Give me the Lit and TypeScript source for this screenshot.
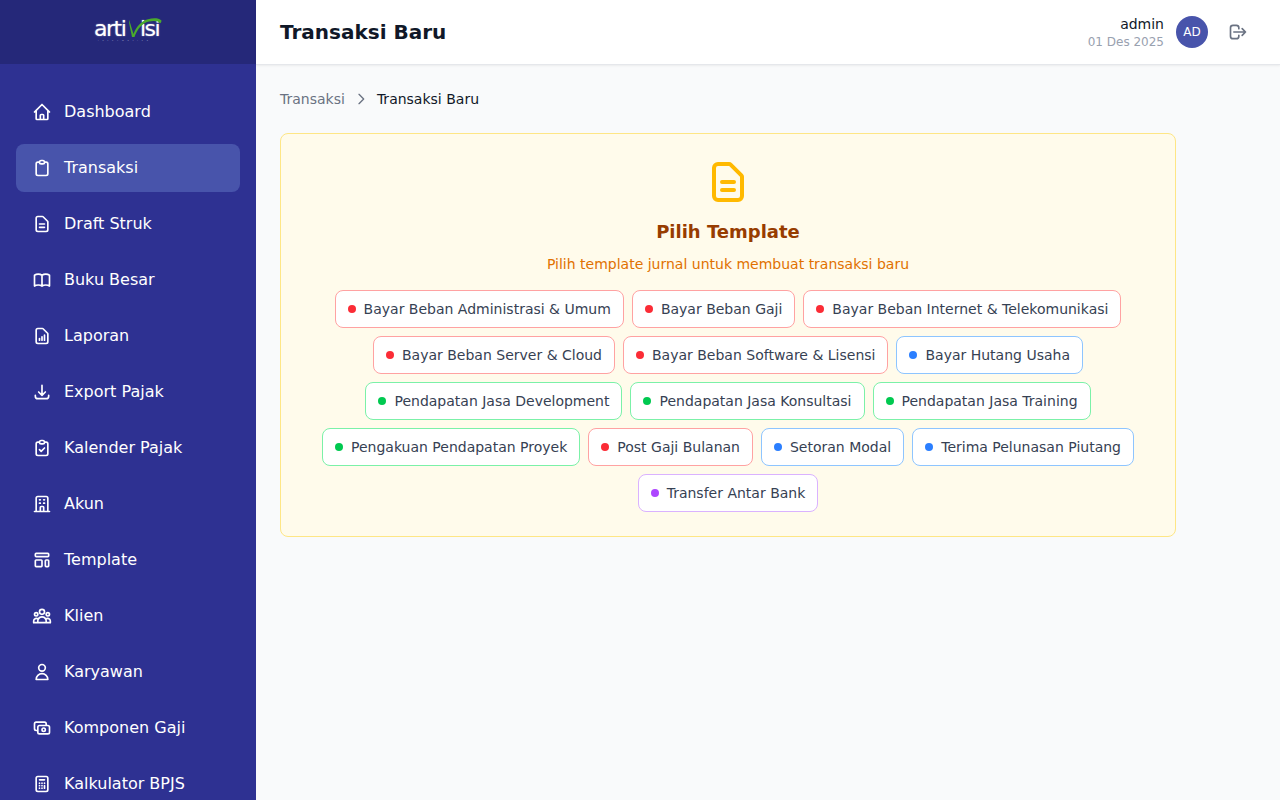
import { LitElement, html, css, svg } from "lit";
import { customElement } from "lit/decorators.js";

const ic: Record<string, string> = {
  home: "M3 12l2-2m0 0l7-7 7 7M5 10v10a1 1 0 001 1h3m10-11l2 2m-2-2v10a1 1 0 01-1 1h-3m-6 0a1 1 0 001-1v-4a1 1 0 011-1h2a1 1 0 011 1v4a1 1 0 001 1m-6 0h6",
  clip: "M9 5H7a2 2 0 00-2 2v12a2 2 0 002 2h10a2 2 0 002-2V7a2 2 0 00-2-2h-2M9 5a2 2 0 002 2h2a2 2 0 002-2M9 5a2 2 0 012-2h2a2 2 0 012 2",
  doc: "M9 12h6m-6 4h6m2 5H7a2 2 0 01-2-2V5a2 2 0 012-2h5.586a1 1 0 01.707.293l5.414 5.414a1 1 0 01.293.707V19a2 2 0 01-2 2z",
  book: "M12 6.253v13m0-13C10.832 5.477 9.246 5 7.5 5S4.168 5.477 3 6.253v13C4.168 18.477 5.754 18 7.5 18s3.332.477 4.5 1.253m0-13C13.168 5.477 14.754 5 16.5 5c1.747 0 3.332.477 4.5 1.253v13C19.832 18.477 18.247 18 16.5 18c-1.746 0-3.332.477-4.5 1.253",
  report: "M9 17v-2m3 2v-4m3 4v-6m2 10H7a2 2 0 01-2-2V5a2 2 0 012-2h5.586a1 1 0 01.707.293l5.414 5.414a1 1 0 01.293.707V19a2 2 0 01-2 2z",
  down: "M4 16v1a3 3 0 003 3h10a3 3 0 003-3v-1m-4-4l-4 4m0 0l-4-4m4 4V4",
  check: "M9 5H7a2 2 0 00-2 2v12a2 2 0 002 2h10a2 2 0 002-2V7a2 2 0 00-2-2h-2M9 5a2 2 0 002 2h2a2 2 0 002-2M9 5a2 2 0 012-2h2a2 2 0 012 2m-6 9l2 2 4-4",
  office: "M19 21V5a2 2 0 00-2-2H7a2 2 0 00-2 2v16m14 0h2m-2 0h-5m-9 0H3m2 0h5M9 7h1m-1 4h1m4-4h1m-1 4h1m-5 10v-5a1 1 0 011-1h2a1 1 0 011 1v5m-4 0h4",
  tpl: "M4 5a1 1 0 011-1h14a1 1 0 011 1v2a1 1 0 01-1 1H5a1 1 0 01-1-1V5zM4 13a1 1 0 011-1h6a1 1 0 011 1v6a1 1 0 01-1 1H5a1 1 0 01-1-1v-6zM16 13a1 1 0 011-1h2a1 1 0 011 1v6a1 1 0 01-1 1h-2a1 1 0 01-1-1v-6z",
  group: "M17 20h5v-2a3 3 0 00-5.356-1.857M17 20H7m10 0v-2c0-.656-.126-1.283-.356-1.857M7 20H2v-2a3 3 0 015.356-1.857M7 20v-2c0-.656.126-1.283.356-1.857m0 0a5.002 5.002 0 019.288 0M15 7a3 3 0 11-6 0 3 3 0 016 0zm6 3a2 2 0 11-4 0 2 2 0 014 0zM7 10a2 2 0 11-4 0 2 2 0 014 0z",
  user: "M16 7a4 4 0 11-8 0 4 4 0 018 0zM12 14a7 7 0 00-7 7h14a7 7 0 00-7-7z",
  cash: "M17 9V7a2 2 0 00-2-2H5a2 2 0 00-2 2v6a2 2 0 002 2h2m2 4h10a2 2 0 002-2v-6a2 2 0 00-2-2H9a2 2 0 00-2 2v6a2 2 0 002 2zm7-5a2 2 0 11-4 0 2 2 0 014 0z",
  calc: "M9 7h6m0 10v-3m-3 3h.01M9 17h.01M9 14h.01M12 14h.01M15 11h.01M12 11h.01M9 11h.01M7 21h10a2 2 0 002-2V5a2 2 0 00-2-2H7a2 2 0 00-2 2v14a2 2 0 002 2z",
  logout: "M17 16l4-4m0 0l-4-4m4 4H7m6 4v1a3 3 0 01-3 3H6a3 3 0 01-3-3V7a3 3 0 013-3h4a3 3 0 013 3v1",
  chev: "M9 5l7 7-7 7",
};

const icon = (n: string, cls: string) => html`<svg class=${cls} viewBox="0 0 24 24" fill="none" stroke="currentColor" stroke-width="2" stroke-linecap="round" stroke-linejoin="round">${svg`<path d=${ic[n]}></path>`}</svg>`;

const nav: [string, string, boolean?][] = [
  ["home", "Dashboard"],
  ["clip", "Transaksi", true],
  ["doc", "Draft Struk"],
  ["book", "Buku Besar"],
  ["report", "Laporan"],
  ["down", "Export Pajak"],
  ["check", "Kalender Pajak"],
  ["office", "Akun"],
  ["tpl", "Template"],
  ["group", "Klien"],
  ["user", "Karyawan"],
  ["cash", "Komponen Gaji"],
  ["calc", "Kalkulator BPJS"],
];

const rows: [string, string][] = [
  ["red", "Bayar Beban Administrasi & Umum"],
  ["red", "Bayar Beban Gaji"],
  ["red", "Bayar Beban Internet & Telekomunikasi"],
  ["red", "Bayar Beban Server & Cloud"],
  ["red", "Bayar Beban Software & Lisensi"],
  ["blue", "Bayar Hutang Usaha"],
  ["green", "Pendapatan Jasa Development"],
  ["green", "Pendapatan Jasa Konsultasi"],
  ["green", "Pendapatan Jasa Training"],
  ["green", "Pengakuan Pendapatan Proyek"],
  ["red", "Post Gaji Bulanan"],
  ["blue", "Setoran Modal"],
  ["blue", "Terima Pelunasan Piutang"],
  ["purple", "Transfer Antar Bank"],
];

@customElement("app-root")
export class AppRoot extends LitElement {
  static styles = css`
    :host { display: block; font-family: "DejaVu Sans", sans-serif; }
    * { box-sizing: border-box; }
    .app { display: flex; height: 100vh; overflow: hidden; background: #f9fafb; }
    .side { width: 256px; flex: none; background: #2e3192; color: #fff; display: flex; flex-direction: column; overflow: hidden; }
    .brand { height: 64px; flex: none; background: #252879; display: flex; justify-content: center; padding-top: 16px; }
    .logo { position: relative; width: 68px; height: 26px; display: flex; font-family: "DejaVu Sans", sans-serif; font-weight: 400; font-size: 22px; line-height: 26px; letter-spacing: -1.5px; color: #fff; text-shadow: 0 0 1.5px rgba(255,255,255,.6); }
    .logo .sw { position: absolute; left: 0; top: 0; width: 68px; height: 26px; overflow: visible; }
    .logo .a { width: 46px; flex: none; }
    .tiny { position: absolute; left: 4px; top: 22px; width: 60px; font-size: 2px; line-height: 4px; letter-spacing: 4px; color: #b9bbdc; white-space: nowrap; text-shadow: none; font-family: "Liberation Sans", sans-serif; }
    nav { padding: 24px 16px 0; display: flex; flex-direction: column; gap: 8px; }
    .item { height: 48px; flex: none; display: flex; align-items: center; gap: 12px; padding: 0 16px; border-radius: 8px; font-size: 16px; line-height: 24px; color: #fff; }
    .item span { display: block; height: 24px; margin-top: -1px; }
    .item.on { background: #4854ab; }
    .ni { width: 20px; height: 20px; flex: none; }
    .main { flex: 1; min-width: 0; display: flex; flex-direction: column; }
    header { height: 65px; flex: none; background: #fff; display: flex; align-items: center; justify-content: space-between; padding: 0 24px; border-bottom: 1px solid #e5e7eb; box-shadow: 0 1px 2px rgba(0,0,0,.06); position: relative; }
    h1 { margin: 0; font-size: 20px; line-height: 28px; font-weight: 700; color: #101828; }
    .right { display: flex; align-items: center; gap: 12px; }
    .who { text-align: right; }
    .name { font-size: 14px; line-height: 20px; color: #101828; }
    .date { font-size: 12px; line-height: 16px; color: #99a1af; }
    .av { width: 32px; height: 32px; border-radius: 50%; background: #4854ab; color: #fff; font-size: 12px; display: flex; align-items: center; justify-content: center; }
    .out { width: 36px; height: 36px; display: flex; align-items: center; justify-content: center; color: #6a7282; }
    .out svg { width: 20px; height: 20px; }
    .content { padding: 24px; }
    .crumb { display: flex; align-items: center; gap: 8px; font-size: 14px; line-height: 20px; height: 20px; color: #6a7282; margin-bottom: 24px; }
    .crumb svg { width: 16px; height: 16px; color: #6a7282; }
    .crumb b { font-weight: 400; color: #101828; }
    .card { width: 896px; background: #fffbeb; border: 1px solid #fee685; border-radius: 8px; padding: 24px; display: flex; flex-direction: column; align-items: center; }
    .big { width: 48px; height: 48px; color: #ffb900; }
    h2 { margin: 12px 0 0; font-size: 18px; line-height: 28px; font-weight: 700; color: #973c00; }
    p { margin: 8px 0 0; font-size: 14px; line-height: 20px; color: #e17100; }
    .chips { margin-top: 16px; display: flex; flex-wrap: wrap; justify-content: center; gap: 8px; }
    .chip { height: 38px; display: flex; align-items: center; gap: 8px; padding: 0 12px; background: #fff; border: 1px solid; border-radius: 8px; font-size: 14px; color: #364153; white-space: nowrap; }
    .dot { width: 8px; height: 8px; border-radius: 50%; flex: none; }
    .chip.red { border-color: #ffa2a2; } .red .dot { background: #fb2c36; }
    .chip.green { border-color: #7bf1a8; } .green .dot { background: #00c950; }
    .chip.blue { border-color: #8ec5ff; } .blue .dot { background: #2b7fff; }
    .chip.purple { border-color: #dab2ff; } .purple .dot { background: #ad46ff; }
  `;

  render() {
    return html`<div class="app">
      <aside class="side">
        <div class="brand">
          <div class="logo">
            <span class="a">arti</span><span class="b">isi</span>
            <svg class="sw" viewBox="0 0 68 26" fill="none">
              <path d="M35 4 C36.500 7 38 14 39.500 18 C42 11 47 5 54 3.200 C59 2 64.500 1.800 67.500 4.500 C67.500 6 66.800 7 65.800 7.500 C65 5 60 4.600 55 5.600 C48 7 43 14 40.500 21 L38 21 C37 15 35 9 35 4 Z" fill="#4aaa2c"></path>
            </svg>
            <span class="tiny">informatika</span>
          </div>
        </div>
        <nav>
          ${nav.map(([i, t, on]) => html`<div class="item ${on ? "on" : ""}">${icon(i, "ni")}<span>${t}</span></div>`)}
        </nav>
      </aside>
      <div class="main">
        <header>
          <h1>Transaksi Baru</h1>
          <div class="right">
            <div class="who"><div class="name">admin</div><div class="date">01 Des 2025</div></div>
            <div class="av">AD</div>
            <div class="out">${icon("logout", "")}</div>
          </div>
        </header>
        <div class="content">
          <div class="crumb"><span>Transaksi</span>${icon("chev", "")}<b>Transaksi Baru</b></div>
          <div class="card">
            ${icon("doc", "big")}
            <h2>Pilih Template</h2>
            <p>Pilih template jurnal untuk membuat transaksi baru</p>
            <div class="chips">
              ${rows.map(([c, t]) => html`<div class="chip ${c}"><span class="dot"></span><span>${t}</span></div>`)}
            </div>
          </div>
        </div>
      </div>
    </div>`;
  }
}
